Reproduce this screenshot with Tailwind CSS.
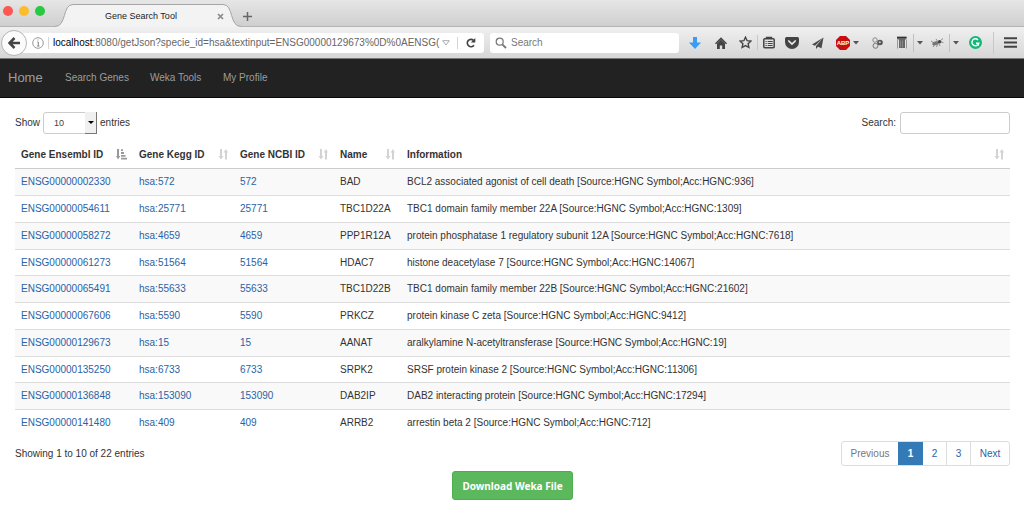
<!DOCTYPE html>
<html lang="en">
<head>
<meta charset="utf-8">
<title>Gene Search Tool</title>
<script src="https://cdn.jsdelivr.net/npm/@tailwindcss/browser@4"></script>
</head>
<body class="min-h-screen bg-white font-['Liberation_Sans',Arial,sans-serif] text-[10px] leading-[14px] text-[#333]">

<svg class="hidden">
  <symbol id="caret" viewBox="0 0 6 4"><path d="M0 0h6L3 3.5z" fill="#555"/></symbol>
  <symbol id="sort" viewBox="0 0 10 11"><path d="M2 0h2v7h1.5L3 10.500.5 7H2zM7 10.500h2V3.500h1L8 0 5.500 3.500H7z" fill="#d3d3d3"/></symbol>
</svg>

<header>
  <div class="flex h-[27px] border-b border-[#b4b4b4] bg-linear-to-b from-[#e6e6e6] to-[#cfcfcf]">
    <div class="flex w-[55px] shrink-0 gap-[6px] pt-[6px] pl-[3px]">
      <button aria-label="Close window" class="size-[10px] rounded-full bg-[#fc5753]"></button>
      <button aria-label="Minimize window" class="size-[10px] rounded-full bg-[#fdbc2e]"></button>
      <button aria-label="Zoom window" class="size-[10px] rounded-full bg-[#28c840]"></button>
    </div>
    <div class="relative h-[27px] w-[186px] shrink-0">
      <svg class="absolute inset-0" width="186" height="27" viewBox="0 0 186 27"><path d="M0 26.500C12 26.500 7 4.500 18 4.500H168C179 4.500 174 26.500 186 26.500V27H0z" fill="#f3f3f3"/><path d="M0 26.500C12 26.500 7 4.500 18 4.500H168C179 4.500 174 26.500 186 26.500" fill="none" stroke="#a5a5a5"/></svg>
      <div class="relative flex h-full items-center pt-[5px] pl-[20px]">
        <span class="flex-1 pl-[30px] text-[9px] text-[#222]">Gene Search Tool</span>
        <button aria-label="Close tab" class="mr-[17px]"><svg width="7" height="7" viewBox="0 0 7 7"><path d="M1 1l5 5M6 1L1 6" stroke="#8a8a8a" stroke-width="1.700"/></svg></button>
      </div>
    </div>
    <button aria-label="New tab" class="pt-[6px] pl-[2px]"><svg width="9" height="9" viewBox="0 0 9 9"><path d="M4.500 0v9M0 4.500h9" stroke="#666" stroke-width="1.500"/></svg></button>
  </div>

  <div class="flex h-8 items-center border-b border-[#777] bg-linear-to-b from-[#f0f0f0] to-[#d6d6d6]">
    <button aria-label="Back" class="relative ml-px flex size-[26px] shrink-0 items-center justify-center rounded-full border border-[#b5b5b5] bg-[#fbfbfb]"><svg width="12" height="12" viewBox="0 0 12 12"><path d="M6.500 1L1.500 6l5 5M2 6h10" fill="none" stroke="#444" stroke-width="2.500"/></svg></button>
    <div class="-ml-1 flex h-5 w-[461px] shrink-0 items-center rounded-r-[3px] bg-white pl-[9px]">
      <svg class="shrink-0" width="12" height="12" viewBox="0 0 12 12"><circle cx="6" cy="6" r="5.300" fill="none" stroke="#999"/><path d="M5.300 5h1v4M5 9h2.500M5.500 3h1" fill="none" stroke="#888"/></svg>
      <div class="ml-1 h-3 w-px shrink-0 bg-[#d5d5d5]"></div>
      <div class="ml-1 w-[387px] shrink-0 whitespace-nowrap text-[#666]" role="textbox" aria-label="Address"><span class="text-black">localhost</span>:8080/getJson?specie_id=hsa&amp;textinput=ENSG00000129673%0D%0AENSG(</div>
      <button aria-label="Show history" class="ml-[2px]"><svg width="8" height="6" viewBox="0 0 8 6"><path d="M.7.7h6.600L4 5z" fill="none" stroke="#aaa"/></svg></button>
      <div class="ml-[7px] h-3 w-px bg-[#d5d5d5]"></div>
      <button aria-label="Reload" class="ml-2"><svg width="10" height="10" viewBox="0 0 10 10"><path d="M8 7.200A3.700 3.700 0 1 1 7.500 2.300" fill="none" stroke="#444" stroke-width="1.600"/><path d="M9.300 0v4.500H4.800z" fill="#444"/></svg></button>
    </div>
    <div class="ml-[6px] flex h-5 flex-1 items-center rounded-[3px] bg-white pl-[5px]">
      <svg class="shrink-0" width="12" height="12" viewBox="0 0 12 12"><circle cx="4.700" cy="4.700" r="3.500" fill="none" stroke="#777" stroke-width="1.200"/><path d="M7.300 7.300l3.700 3.700" stroke="#777" stroke-width="1.800"/></svg>
      <input aria-label="Web search" placeholder="Search" class="ml-1 w-full min-w-0 placeholder:text-[#777]">
    </div>
    <div class="flex h-full shrink-0 items-center pl-[3px]">
      <button aria-label="Downloads" class="flex w-[26px] justify-center"><svg width="12" height="12" viewBox="0 0 12 12"><path d="M4 0h4v5.500h4L6 12 0 5.500h4z" fill="#3b9cf5"/></svg></button>
      <button aria-label="Home" class="flex w-[26px] justify-center"><svg width="12" height="12" viewBox="0 0 12 12"><path d="M6 .3l6 5.900-1 1L6 2.400 1 7.200l-1-1z" fill="#444"/><path d="M6 2.600l4 3.800V12H7.200V8.500H4.800V12H2V6.400z" fill="#444"/></svg></button>
      <button aria-label="Bookmark" class="flex w-[23px] justify-center"><svg width="13" height="13" viewBox="0 0 13 13"><path d="M6.500 1.200l1.600 3.500 3.800.4-2.800 2.600.8 3.800-3.400-1.900-3.400 1.900.8-3.800L1.100 5.100l3.800-.4z" fill="none" stroke="#444" stroke-width="1.400"/></svg></button>
      <div class="h-[15px] w-px bg-[#c8c8c8]"></div>
      <button aria-label="Bookmarks list" class="flex w-[21px] justify-center"><svg width="12" height="13" viewBox="0 0 12 13"><rect x=".8" y="2.800" width="10.400" height="9" rx="1" fill="none" stroke="#444" stroke-width="1.500"/><path d="M3.500 3V1.500h5V3" fill="none" stroke="#444" stroke-width="1.400"/><path d="M2.500 5.500h1.200M4.700 5.500h5M2.500 7.500h1.200M4.700 7.500h5M2.500 9.500h1.200M4.700 9.500h5" stroke="#444"/></svg></button>
      <button aria-label="Pocket" class="flex w-[26px] justify-center"><svg width="14" height="12" viewBox="0 0 14 12"><path d="M1.500 0h11Q14 0 14 1.500V5a7 7 0 0 1-14 0V1.500Q0 0 1.500 0z" fill="#444"/><path d="M3.800 4L7 7.100 10.200 4" fill="none" stroke="#eee" stroke-width="1.700" stroke-linecap="round"/></svg></button>
      <button aria-label="Share" class="flex w-[25px] justify-center"><svg width="12" height="12" viewBox="0 0 12 12"><path d="M11.500.5L0 7.500l3 1.200zM11.500.5L4 9v3l2-2.200 3.500 1.400z" fill="#4a4a4a"/></svg></button>
      <button aria-label="Adblock Plus" class="flex w-[34px] items-center justify-center gap-[3px]"><svg width="14" height="14" viewBox="0 0 14 14"><path d="M4 0h6l4 4v6l-4 4H4l-4-4V4z" fill="#c70d12"/><text x="7" y="9.200" text-anchor="middle" font-size="6" font-weight="700" fill="#fff">ABP</text></svg><svg width="6" height="4"><use href="#caret"/></svg></button>
      <button aria-label="Links add-on" class="flex w-[26px] justify-center"><svg width="11" height="12" viewBox="0 0 11 12"><circle cx="3" cy="3" r="2.200" fill="#e8e8e8" stroke="#888"/><circle cx="3.500" cy="8.800" r="2.500" fill="#ddd" stroke="#777"/><circle cx="8" cy="5.500" r="2.800" fill="#555"/><circle cx="7.800" cy="5.200" r="1" fill="#ccc"/></svg></button>
      <button aria-label="Measure add-on" class="flex w-[23px] justify-center"><svg width="12" height="13" viewBox="0 0 12 13"><path d="M1 .5h9.500v3H9V12H3V3.500H1z" fill="#666"/><path d="M1 1.500h9.500" stroke="#333"/><path d="M1.500 4v8.500M10.500 4v8.500" stroke="#999"/><path d="M4.500 4.500v7M6.500 4.500v7" stroke="#888"/></svg></button>
      <div class="h-[18px] w-px bg-[#c0c0c0]"></div>
      <button aria-label="Measure options" class="flex w-3 justify-center"><svg width="6" height="4"><use href="#caret"/></svg></button>
      <button aria-label="Firebug" class="flex w-[23px] justify-center"><svg width="13" height="11" viewBox="0 0 13 11"><ellipse cx="4.500" cy="6.300" rx="3.300" ry="1.800" transform="rotate(-20 4.500 6.300)" fill="#777"/><circle cx="8.600" cy="4.800" r="1.700" fill="#444"/><path d="M0 4l3 2M2 10l2-3M5.500 10l1-3M9 9L7.500 6M5 2l2 3M9 4l3-2.500M10 5l2.500.5" fill="none" stroke="#777" stroke-width=".8"/></svg></button>
      <div class="h-[18px] w-px bg-[#c0c0c0]"></div>
      <button aria-label="Firebug options" class="flex w-3 justify-center"><svg width="6" height="4"><use href="#caret"/></svg></button>
      <button aria-label="Grammarly" class="flex w-[26px] justify-center"><svg width="13" height="13" viewBox="0 0 13 13"><circle cx="6.500" cy="6.500" r="6.500" fill="#11b877"/><path d="M9 3.900A3.500 3.500 0 1 0 9.800 7.300H7" fill="none" stroke="#fff" stroke-width="1.400"/><path d="M9.300 7.300v2.400" stroke="#fff" stroke-width="1.200"/></svg></button>
      <div class="mr-[3px] ml-[5px] h-[22px] w-px bg-[#c8c8c8]"></div>
      <button aria-label="Open menu" class="flex w-[27px] justify-center"><svg width="13" height="11" viewBox="0 0 13 11"><path d="M0 1.200h13M0 5.500h13M0 9.800h13" stroke="#444" stroke-width="2"/></svg></button>
    </div>
  </div>
</header>

<nav class="flex h-[39px] items-center border-b border-[#080808] bg-[#222] pl-2 text-[#9d9d9d]">
  <a href="#" class="w-[57px] text-[13px]">Home</a>
  <a href="#" class="w-[85px]">Search Genes</a>
  <a href="#" class="w-[73px]">Weka Tools</a>
  <a href="#">My Profile</a>
</nav>

<main class="pt-[14px] pr-[14px] pl-[15px]">
  <div class="flex items-start justify-between">
    <label class="flex items-center gap-[3px] text-[#333]"><span>Show</span>
      <span class="relative flex">
        <select class="h-[22px] w-[54px] appearance-none rounded-[3px] border border-[#ccc] bg-white pl-[10px] text-[9px] text-[#444]"><option>10</option><option>25</option><option>50</option><option>100</option></select>
        <span class="pointer-events-none absolute inset-y-0 right-0 flex w-3 items-center justify-center border-r border-b border-[#777] bg-[#f0f0f0]"><svg width="6" height="3" viewBox="0 0 6 3"><path d="M0 0h6L3 3z" fill="#000"/></svg></span>
      </span>
      <span>entries</span></label>
    <label class="flex items-center gap-1"><span>Search:</span><input type="search" class="h-[22px] w-[110px] rounded-[3px] border border-[#ccc] bg-white px-2"></label>
  </div>

  <table class="mt-[7px] w-full table-fixed border-separate border-spacing-0 whitespace-nowrap">
    <colgroup><col class="w-[118px]"><col class="w-[101px]"><col class="w-[100px]"><col class="w-[67px]"><col></colgroup>
    <thead>
      <tr class="h-[28px] text-left *:border-b *:border-[#ccc] *:px-[6px] *:py-0">
        <th scope="col"><div class="flex items-center justify-between">Gene Ensembl ID <svg width="11" height="11" viewBox="0 0 11 11"><path d="M1 0h2v7h1.300L2 10.500 0 7h1z" fill="#999"/><path d="M5 1.200h2M5 4h3M5 6.800h4.500M5 9.600h6" stroke="#999" stroke-width="1.800"/></svg></div></th>
        <th scope="col"><div class="flex items-center justify-between">Gene Kegg ID <svg width="10" height="11"><use href="#sort"/></svg></div></th>
        <th scope="col"><div class="flex items-center justify-between">Gene NCBI ID <svg width="10" height="11"><use href="#sort"/></svg></div></th>
        <th scope="col"><div class="flex items-center justify-between">Name <svg width="10" height="11"><use href="#sort"/></svg></div></th>
        <th scope="col"><div class="flex items-center justify-between">Information <svg width="10" height="11"><use href="#sort"/></svg></div></th>
      </tr>
    </thead>
    <tbody class="[&_a]:text-[#2a62a6] [&_td]:border-b [&_td]:border-[#ddd] [&_td]:px-[6px] [&_td]:py-0 [&_tr]:h-[27px] [&_tr:nth-child(4n)]:h-[26px] [&_tr:nth-child(odd)]:bg-[#f9f9f9] [&_tr:last-child_td]:border-transparent">
      <tr><td><a href="#">ENSG00000002330</a></td><td><a href="#">hsa:572</a></td><td><a href="#">572</a></td><td>BAD</td><td>BCL2 associated agonist of cell death [Source:HGNC Symbol;Acc:HGNC:936]</td></tr>
      <tr><td><a href="#">ENSG00000054611</a></td><td><a href="#">hsa:25771</a></td><td><a href="#">25771</a></td><td>TBC1D22A</td><td>TBC1 domain family member 22A [Source:HGNC Symbol;Acc:HGNC:1309]</td></tr>
      <tr><td><a href="#">ENSG00000058272</a></td><td><a href="#">hsa:4659</a></td><td><a href="#">4659</a></td><td>PPP1R12A</td><td>protein phosphatase 1 regulatory subunit 12A [Source:HGNC Symbol;Acc:HGNC:7618]</td></tr>
      <tr><td><a href="#">ENSG00000061273</a></td><td><a href="#">hsa:51564</a></td><td><a href="#">51564</a></td><td>HDAC7</td><td>histone deacetylase 7 [Source:HGNC Symbol;Acc:HGNC:14067]</td></tr>
      <tr><td><a href="#">ENSG00000065491</a></td><td><a href="#">hsa:55633</a></td><td><a href="#">55633</a></td><td>TBC1D22B</td><td>TBC1 domain family member 22B [Source:HGNC Symbol;Acc:HGNC:21602]</td></tr>
      <tr><td><a href="#">ENSG00000067606</a></td><td><a href="#">hsa:5590</a></td><td><a href="#">5590</a></td><td>PRKCZ</td><td>protein kinase C zeta [Source:HGNC Symbol;Acc:HGNC:9412]</td></tr>
      <tr><td><a href="#">ENSG00000129673</a></td><td><a href="#">hsa:15</a></td><td><a href="#">15</a></td><td>AANAT</td><td>aralkylamine N-acetyltransferase [Source:HGNC Symbol;Acc:HGNC:19]</td></tr>
      <tr><td><a href="#">ENSG00000135250</a></td><td><a href="#">hsa:6733</a></td><td><a href="#">6733</a></td><td>SRPK2</td><td>SRSF protein kinase 2 [Source:HGNC Symbol;Acc:HGNC:11306]</td></tr>
      <tr><td><a href="#">ENSG00000136848</a></td><td><a href="#">hsa:153090</a></td><td><a href="#">153090</a></td><td>DAB2IP</td><td>DAB2 interacting protein [Source:HGNC Symbol;Acc:HGNC:17294]</td></tr>
      <tr><td><a href="#">ENSG00000141480</a></td><td><a href="#">hsa:409</a></td><td><a href="#">409</a></td><td>ARRB2</td><td>arrestin beta 2 [Source:HGNC Symbol;Acc:HGNC:712]</td></tr>
    </tbody>
  </table>

  <div class="mt-1 flex items-center justify-between">
    <p>Showing 1 to 10 of 22 entries</p>
    <div class="flex h-[25px] overflow-hidden rounded-[3px] border border-[#ddd] text-[#2a62a6] *:flex *:items-center *:justify-center">
      <a href="#" class="w-[56px] text-[#777]">Previous</a>
      <a href="#" aria-current="page" class="w-[25px] bg-[#337ab7] font-bold text-white">1</a>
      <a href="#" class="w-[23px]">2</a>
      <a href="#" class="w-6 border-l border-[#ddd]">3</a>
      <a href="#" class="w-[39px] border-l border-[#ddd]">Next</a>
    </div>
  </div>
  <div class="mt-[5px] flex justify-center">
    <button class="h-[29px] w-[121px] rounded-[3px] border border-[#4cae4c] bg-[#5cb85c] font-['Noto_Sans',sans-serif] font-bold text-white">Download Weka File</button>
  </div>
</main>
</body>
</html>
